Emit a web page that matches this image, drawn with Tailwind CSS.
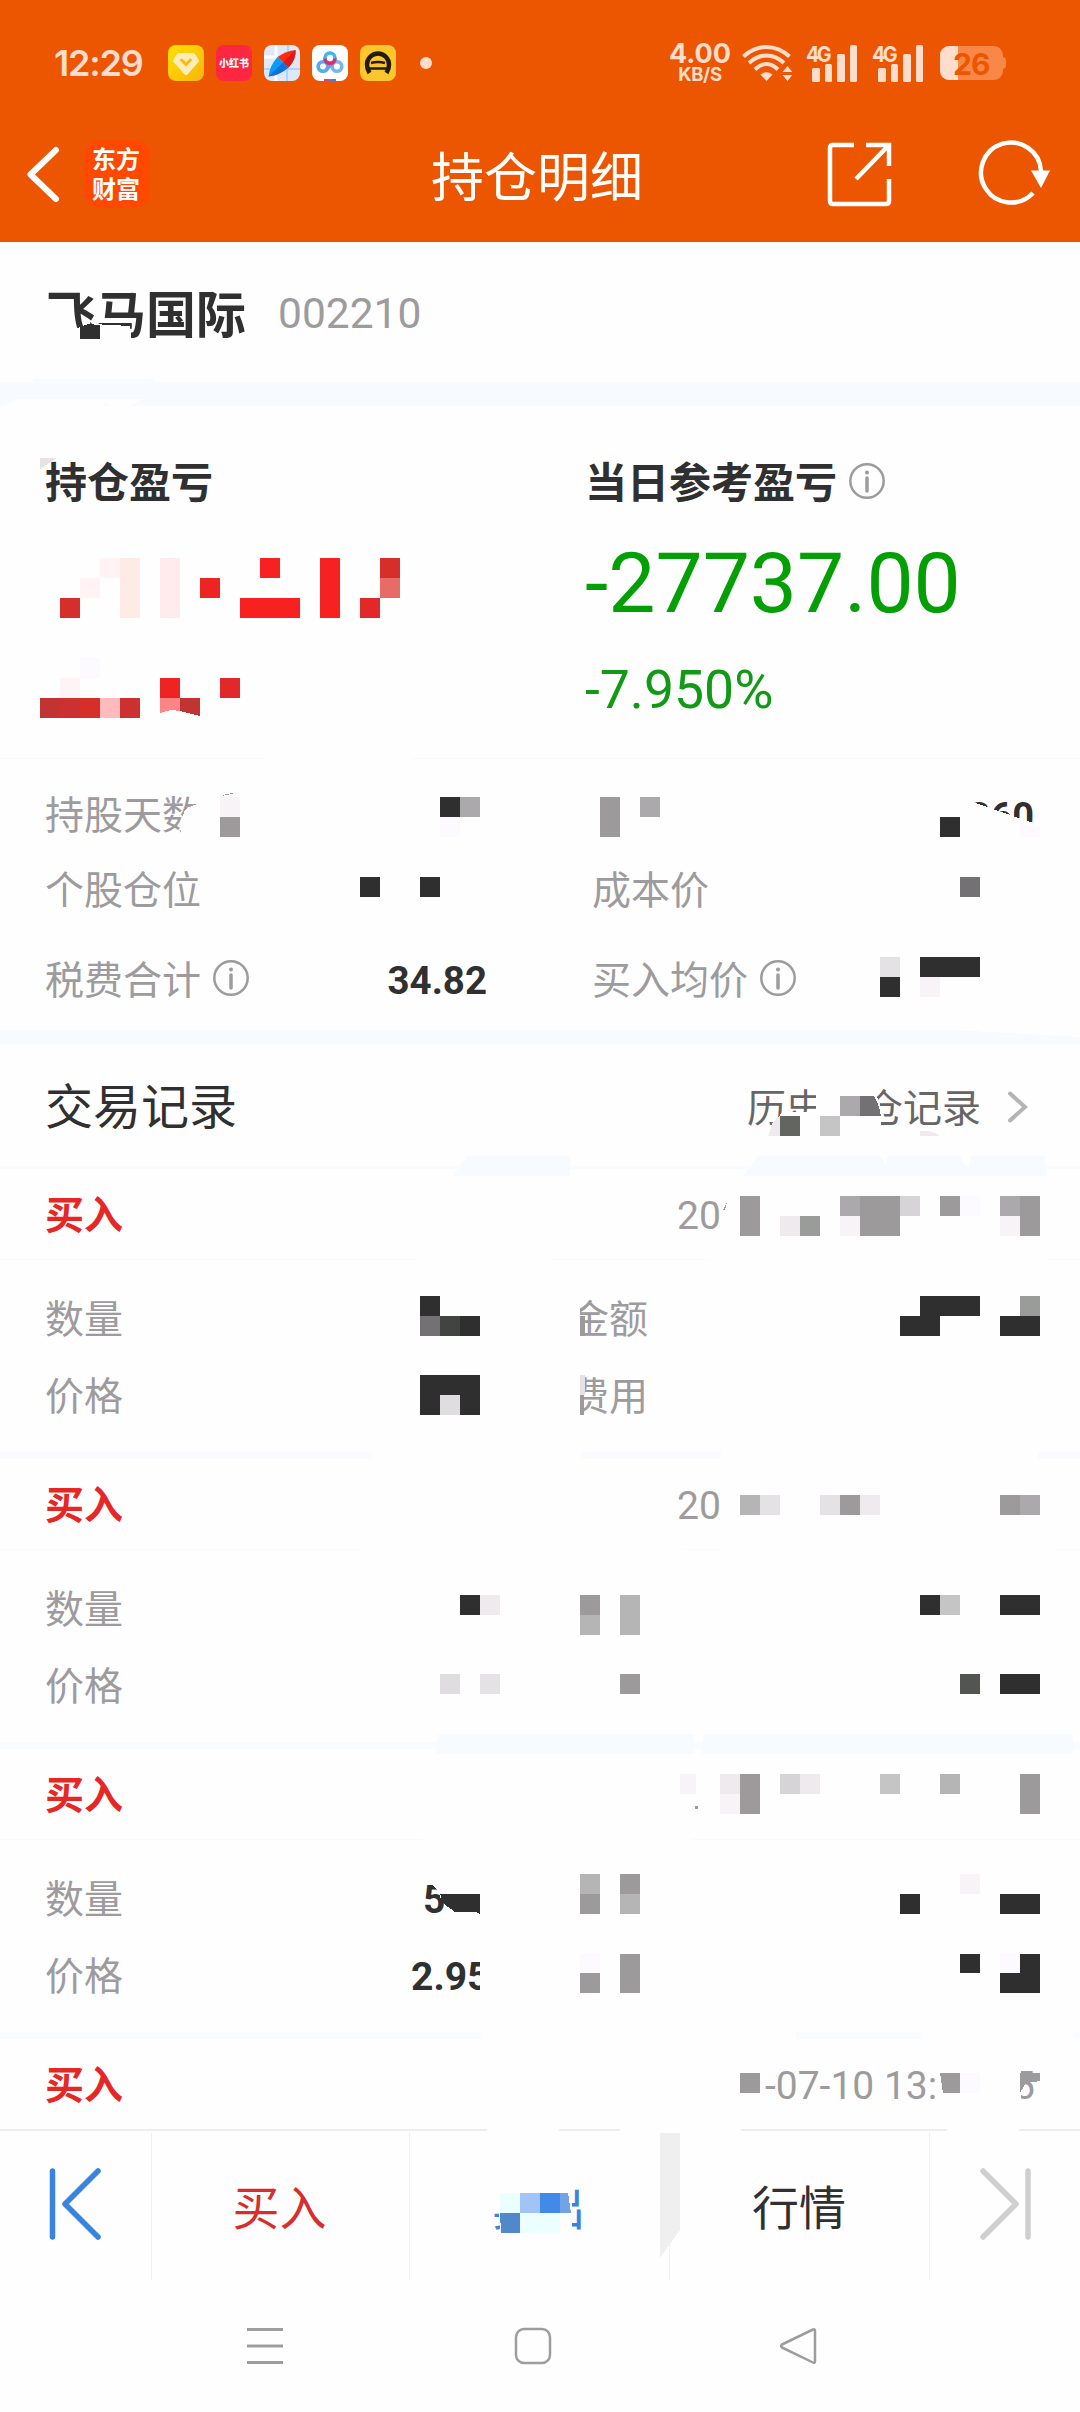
<!DOCTYPE html>
<html lang="zh-CN">
<head>
<meta charset="utf-8">
<title>持仓明细</title>
<script src="https://cdn.jsdelivr.net/npm/@tailwindcss/browser@4"></script>
</head>
<body class="relative w-[1080px] h-[2412px] overflow-hidden bg-[#fefefe] font-['Roboto','Noto_Sans_CJK_SC',sans-serif] text-[39px] leading-none text-[#303030] whitespace-nowrap">

<header class="h-[242px] bg-[#ec5600] text-white">
  <div class="h-[126px] flex items-center pl-[54px] text-[#ffdccb]">
    <span class="w-[114px] font-['Inter'] font-semibold text-[36px] tracking-[-1.2px]">12:29</span>
    <div class="flex gap-3">
      <svg class="size-9" viewBox="0 0 36 36"><defs><linearGradient id="gy" x2="1" y2="1"><stop stop-color="#ffe000"/><stop offset="1" stop-color="#f9b50d"/></linearGradient></defs><rect width="36" height="36" rx="8" fill="url(#gy)"/><path d="M11 8h14q1 0 2 1l4 6q.5 1-.5 2L19.500 29.500q-1.500 1.500-3 0L5.500 17q-1-1-.5-2l4-6q1-1 2-1z" fill="#ffecb8"/><path d="M13.500 15l4.500 4.500 4.500-4.500" fill="none" stroke="#f7bb10" stroke-width="3" stroke-linecap="round"/></svg>
      <div class="size-9 rounded-lg bg-[#fe2742] flex items-center justify-center font-black text-[10px] text-white font-['Noto_Sans_CJK_SC']">小红书</div>
      <svg class="size-9" viewBox="0 0 36 36"><rect width="36" height="36" rx="8" fill="#dfe8fb"/><path d="M12 0v36M0 12h14" stroke="#fff" stroke-width="3"/><path d="M24 0v10M0 24h8M20 24h16M23 22v14" stroke="#a8d8f4" stroke-width="2"/><path d="M31.500 5q1 9-7 17.500l-11-10.500Q22 6 31.500 5z" fill="#ff2a06"/><path d="M24.500 22.500l-5.500-5L31.500 5q1 9-7 17.500z" fill="#d81b1b"/><path d="M13.500 12l11 10.500Q16 30 4.500 31.500 6 20 13.500 12z" fill="#0a9cf5"/><path d="M4.500 31.500L19 17.500l5.500 5Q16 30 4.500 31.500z" fill="#1370d8"/></svg>
      <svg class="size-9" viewBox="0 0 36 36" fill="none" stroke-width="3.600"><rect width="36" height="36" rx="8" fill="#fff"/><circle cx="11" cy="21.500" r="4.800" stroke="#55a9ee"/><circle cx="25" cy="21.500" r="4.800" stroke="#77b6f0"/><path d="M14 25l7-7" stroke="#5ea6ee"/><circle cx="18" cy="13" r="5" stroke="#3db6ee"/><path d="M13 13.500a5 5 0 0 0 10 0" stroke="#dc2d70"/><path d="M12 35h6" stroke="#e8416f" stroke-width="2"/><path d="M18 35h6" stroke="#3b83e8" stroke-width="2"/></svg>
      <svg class="size-9" viewBox="0 0 36 36" fill="none" stroke="#211c0c" stroke-width="4.500"><rect width="36" height="36" rx="8" fill="#fdc62c" stroke="none"/><path d="M9.500 28Q7 24 7 19.500a11 11 0 0 1 22 0Q29 24 26.500 28"/><path d="M9 23.500h18M11 18q7-2 14 0" stroke-width="2.500"/></svg>
    </div>
    <span class="ml-6 size-3 rounded-full bg-[#ffdccb]"></span>
    <div class="ml-[237px] w-[62px] flex flex-col items-center font-['Inter'] font-bold">
      <span class="text-[27px] leading-[19px]">4.00</span>
      <span class="mt-[4px] text-[18.5px] leading-[15px] tracking-[-0.3px]">KB/S</span>
    </div>
    <svg class="ml-[11px] w-[50px] h-9" viewBox="0 0 50 36" fill="none" stroke="#ffdccb" stroke-width="4"><path d="M1.500 11.500Q12 2 24.500 2T47.500 11.500M7 18Q15 10.500 24.500 10.500T42 18M13 24.500Q18.500 19 24.500 19T36 24.500"/><path d="M18.500 29.500Q24.500 25 30.500 29.500L24.500 36z" fill="#ffdccb" stroke="none"/><path d="M40.500 27l5-6 5 6zM40.500 30l5 6 5-6z" fill="#ffdccb" stroke="none"/></svg>
    <div class="relative ml-[14px] w-[52px] h-[37px]">
      <span class="absolute left-0 -top-px font-['Inter'] font-bold text-[22px] leading-[21px] tracking-[-3px] origin-left scale-x-90">4G</span>
      <svg class="w-[52px] h-[37px]" viewBox="0 0 52 37" fill="#ffdccb"><rect x="6" y="23" width="8" height="14" rx="1.500"/><rect x="19" y="19" width="7" height="18" rx="1.500"/><rect x="31" y="9" width="8" height="28" rx="1.500"/><rect x="44" width="7" height="37" rx="1.500"/></svg>
    </div>
    <div class="relative ml-[14px] w-[52px] h-[37px]">
      <span class="absolute left-0 -top-px font-['Inter'] font-bold text-[22px] leading-[21px] tracking-[-3px] origin-left scale-x-90">4G</span>
      <svg class="w-[52px] h-[37px]" viewBox="0 0 52 37" fill="#ffdccb"><rect x="6" y="23" width="8" height="14" rx="1.500"/><rect x="19" y="19" width="7" height="18" rx="1.500"/><rect x="31" y="9" width="8" height="28" rx="1.500"/><rect x="44" width="7" height="37" rx="1.500"/></svg>
    </div>
    <div class="relative ml-4 w-[66px] h-[34px]">
      <div class="w-[63px] h-[34px] rounded-[9px] overflow-hidden bg-[#fa8748] flex"><span class="w-[18px] h-full bg-[#ffdccb]"></span></div>
      <span class="absolute right-0 top-[11px] w-[4px] h-3 rounded-r bg-[#fa8748]"></span>
      <span class="absolute left-[13px] top-[3px] font-['Inter'] font-bold text-[30px] leading-[30px] tracking-[-1px] text-[#ec5600]">26</span>
    </div>
  </div>
  <div class="h-[96px] flex items-center">
    <svg class="ml-[26px] w-[36px] h-[60px]" viewBox="0 0 36 60" fill="none" stroke="#fff" stroke-width="6" stroke-linecap="round" stroke-linejoin="round"><path d="M30 6L4.500 30.500 30 55"/></svg>
    <div class="ml-[22px] w-[66px] h-[68px] rounded-2xl bg-[#ff4800] flex flex-col items-center justify-center gap-[3px] pb-1 pr-[2px] font-bold text-[24px] leading-[27px] font-['Noto_Sans_CJK_SC']"><span>东方</span><span>财富</span></div>
    <h1 class="ml-[281px] w-[220px] text-[53px] leading-[60px] pt-2.5">持仓明细</h1>
    <svg class="ml-[175px] w-[66px] h-[66px]" viewBox="0 0 66 66" fill="none" stroke="#fff" stroke-width="4.500"><path d="M28 4H7Q4 4 4 7V60q0 3 3 3H60q3 0 3-3V38M40 4H63V25M62 5L30 38"/></svg>
    <svg class="ml-[84px] w-[76px] h-[70px]" viewBox="0 0 76 70" fill="none" stroke="#fff" stroke-width="4.500"><path d="M57 54A30 30 0 1 1 65 32"/><path d="M55 31.500h19l-9 17.500z" fill="#fff" stroke="none"/></svg>
  </div>
</header>

<section class="h-[140px] flex items-center pl-[46px]">
  <h2 class="font-bold text-[50px] leading-[60px] pt-[7px]">飞马国际</h2>
  <span class="ml-[32px] text-[42.500px] pt-1 text-[#9d9b9d]">002210</span>
</section>
<div class="h-6 bg-[#f7faff]"></div>

<section>
  <div class="h-[353px] pt-[46px] grid grid-cols-[540px_540px] border-b border-[#fafafa]">
    <div class="pl-[45px]"><h3 class="h-[60px] flex items-center pt-[3px] font-bold text-[42px]">持仓盈亏</h3></div>
    <div class="pl-[45px]">
      <h3 class="h-[60px] flex items-center pt-[3px] font-bold text-[42px]">当日参考盈亏
        <svg class="ml-3 -mt-[5px] size-9" viewBox="0 0 36 36" fill="none" stroke="#9d9b9d" stroke-width="2.500"><circle cx="18" cy="18" r="16.700"/><path d="M18 15v13" stroke-width="3.500" stroke-linecap="round"/><circle cx="18" cy="9.500" r="2" fill="#9d9b9d" stroke="none"/></svg></h3>
      <div class="mt-6 h-[94px] flex items-center pt-px text-[84px] text-[#049f04]">-27737.00</div>
      <div class="mt-[30px] h-[60px] flex items-center text-[53.500px] text-[#129a16]">-7.950%</div>
    </div>
  </div>
  <div class="h-[271px] pt-[20px] grid grid-cols-[441px_106px_442px] grid-rows-[75px_74px_90px] pl-[45px] text-[#9d9b9d]">
    <div class="flex items-center">持股天数</div><div></div><div class="flex items-center justify-end text-[#303030] font-bold text-[38px]">360</div>
    <div class="flex items-center">个股仓位</div><div></div><div class="flex items-center">成本价</div>
    <div class="flex items-center justify-between pt-4"><span class="flex items-center">税费合计<svg class="ml-3 -mt-[6px] size-9" viewBox="0 0 36 36" fill="none" stroke="#9d9b9d" stroke-width="2.500"><circle cx="18" cy="18" r="16.700"/><path d="M18 15v13" stroke-width="3.500" stroke-linecap="round"/><circle cx="18" cy="9.500" r="2" fill="#9d9b9d" stroke="none"/></svg></span><b class="text-[#303030] text-[38.500px] -mr-px">34.82</b></div>
    <div></div>
    <div class="flex items-center pt-4">买入均价<svg class="ml-3 -mt-[6px] size-9" viewBox="0 0 36 36" fill="none" stroke="#9d9b9d" stroke-width="2.500"><circle cx="18" cy="18" r="16.700"/><path d="M18 15v13" stroke-width="3.500" stroke-linecap="round"/><circle cx="18" cy="9.500" r="2" fill="#9d9b9d" stroke="none"/></svg></div>
  </div>
</section>
<div class="h-[14px] bg-[#f7faff]"></div>

<section>
  <div class="h-[122px] flex items-center justify-between pl-[45px] pr-[51px]">
    <h3 class="text-[48px] pt-[5px]">交易记录</h3>
    <span class="flex items-center text-[#666] pt-[9px]">历史持仓记录<svg class="ml-[26px] -mt-[6px] w-[22px] h-8" viewBox="0 0 22 32" fill="none" stroke="#b5b3b5" stroke-width="4" stroke-linecap="round"><path d="M3 2.500L18 16 3 29.500"/></svg></span>
  </div>
  <div class="h-[3px] bg-[#f9fbff]"></div>

  <article class="h-[283px] pb-[18px]">
    <div class="h-[91px] flex items-center pl-[45px] border-b border-[#fafafa] pt-1"><b class="w-[632px] text-[#e62726]">买入</b><span class="text-[#9d9b9d]">20</span></div>
    <div class="pt-[22px] grid grid-cols-[441px_84px_1fr] auto-rows-[77px] items-center pl-[45px] text-[#9d9b9d]"><span>数量</span><span></span><span>金额</span><span>价格</span><span></span><span>费用</span></div>
  </article>
  <div class="h-[7px] bg-[#f9fbff]"></div>

  <article class="h-[283px] pb-[18px]">
    <div class="h-[91px] flex items-center pl-[45px] border-b border-[#fafafa] pt-1"><b class="w-[632px] text-[#e62726]">买入</b><span class="text-[#9d9b9d]">20</span></div>
    <div class="pt-[22px] grid grid-cols-[441px_85px_1fr] auto-rows-[77px] items-center pl-[45px] text-[#9d9b9d]"><span>数量</span><span></span><span></span><span>价格</span></div>
  </article>
  <div class="h-[7px] bg-[#f9fbff]"></div>

  <article class="h-[283px] pb-[18px]">
    <div class="h-[91px] flex items-center pl-[45px] border-b border-[#fafafa] pt-1"><b class="text-[#e62726]">买入</b></div>
    <div class="pt-[22px] grid grid-cols-[378px_63px] auto-rows-[77px] items-center pl-[45px] text-[#9d9b9d]"><span>数量</span><b class="text-[#303030]">5</b><span>价格</span><b class="text-[#303030] -ml-3">2.95</b></div>
  </article>
  <div class="h-[7px] bg-[#f9fbff]"></div>

  <div class="h-[90px] flex items-center pl-[45px] pr-[45px] pt-1"><b class="w-[720px] text-[#e62726]">买入</b><span class="flex-1 text-[#9d9b9d]">-07-10 13:</span><span class="text-[#9d9b9d]">5</span></div>
</section>

<footer>
  <div class="h-[153px] flex border-t-2 border-[#ededed] text-[47px]">
    <div class="w-[151px] flex items-center pb-3 pl-[46px]"><svg class="mt-[6px] w-[60px] h-[76px]" viewBox="0 0 60 76" fill="none" stroke="#3a84df" stroke-width="5.500" stroke-linecap="round" stroke-linejoin="round"><path d="M6.500 5v66M52 5L19 38l33 33"/></svg></div>
    <div class="my-0.5 w-[259px] flex items-center justify-center pr-[2px] pt-1 border-x border-[#f0f0f0] text-[#d72e2b]">买入</div>
    <div class="my-0.5 w-[260px] flex items-center justify-center pr-[2px] pt-1 border-r border-[#f0f0f0] text-[#3a84df]">卖出</div>
    <div class="my-0.5 w-[260px] flex items-center justify-center pr-px pt-1 border-r border-[#f0f0f0]">行情</div>
    <div class="w-[150px] flex items-center pb-3 pl-[47px]"><svg class="mt-[6px] w-[60px] h-[76px]" viewBox="0 0 60 76" fill="none" stroke="#cfcfcf" stroke-width="5.500" stroke-linecap="round" stroke-linejoin="round"><path d="M51 5v66M6 5l33 33L6 71"/></svg></div>
  </div>
  <nav class="h-[128px] flex items-center pl-[246px] gap-[230px]">
    <svg class="size-[38px]" viewBox="0 0 38 38" stroke="#9d9d9d" stroke-width="3"><path d="M1 2.500h36M1 19h36M1 35.500h36"/></svg>
    <svg class="size-[38px]" viewBox="0 0 38 38" fill="none" stroke="#9d9d9d" stroke-width="2.500"><rect x="2" y="2" width="34" height="34" rx="8"/></svg>
    <svg class="size-[38px] -ml-[3px]" viewBox="0 0 38 38" fill="none" stroke="#9d9d9d" stroke-width="2.500" stroke-linejoin="round"><path d="M34 2.500q2-1 2 1.500v30q0 2.500-2 1.500L3 20.500q-2-1.500 0-3z"/></svg>
  </nav>
</footer>

<!-- privacy mosaic laid over the page -->
<svg class="absolute inset-0 w-[1080px] h-[2412px] pointer-events-none" viewBox="0 0 1080 2412" shape-rendering="crispEdges">
  <g fill="#fefefe">
    <path d="M70 333L80 327 92 324 130 326 132 342H70z"/>
    <path d="M5 406L16 399H143L130 406H110L104 403 105 406z"/>
    <path d="M265 757h147v5h-147z"/>
    <path d="M181 840V822L184 812 187 808 200 803V840z"/>
    <path d="M970 801L1036 824V845H960z"/>
    <path d="M953 1030L1080 1030V1037z"/>
    <path d="M774 1125L781 1113 816 1111V1086H872L880 1104 882 1140H770z"/>
    <path d="M419 1257h133v5H419zM708 1257h339v5H708zM362 1547h322v5H362zM722 1547h332v5H722zM422 1837h270v5H422z"/>
    <path d="M565 1290h15v130h-15zM372 1450h209v10H372zM721 1450h317v10H721zM482 2030h314v10H482zM923 2030h152v10H923z"/>
    <path d="M427 1880L440 1892V1898H447V1880zM480 1955h12v40h-12z"/>
    <path d="M487 2127h72v6h-72zM620 2127h121v6H620zM947 2127h72v6h-72z"/>
    <path d="M490 2180H572V2236H501L499 2213H490z"/>
    <path d="M1015 2068h6v35h-6z"/>
  </g>
  <g fill="#f7faff">
    <path d="M33 379H155V383H33z"/>
    <path d="M453 1176L467 1156H570V1176zM743 1176L758 1156H880L886 1165 888 1156H960L968 1172 971 1156H1045L1047 1176z"/>
    <path d="M438 1734H694V1754H436zM703 1734H1073V1754H702z"/>
  </g>
  <path fill="#e6e2e6" d="M40 458H57L40 469z"/>
  <path fill="#fff3f6" d="M80 578h20v20h-20zM100 558h20v20h-20zM60 678h20v20h-20z"/>
  <path fill="#ffebe5" d="M120 558h20v60h-20z"/>
  <path fill="#ffeaee" d="M160 558h20v60h-20z"/>
  <path fill="#d62f2a" d="M60 598h20v20h-20zM380 558h20v20h-20zM80 698h20v20h-20z"/>
  <path fill="#ee2423" d="M200 578h20v20h-20zM160 678h20v20h-20z"/>
  <path fill="#f82121" d="M240 598h60v20h-60zM260 558h20v20h-20zM320 558h20v60h-20z"/>
  <path fill="#e1292a" d="M360 598h20v20h-20zM220 678h20v20h-20z"/>
  <path fill="#e76b66" d="M380 578h20v20h-20z"/>
  <path fill="#c23433" d="M40 698h20v20h-20zM180 698h20v18L180 711z"/>
  <path fill="#cc3031" d="M60 698h20v20h-20zM120 698h20v20h-20z"/>
  <path fill="#ffbabd" d="M100 698h20v20h-20z"/>
  <path fill="#ff8486" d="M160 698h20v13L171 710 160 713z"/>
  <path fill="#fdfaff" d="M80 658h20v20h-20zM440 817h20v20h-20zM1020 823l20 5v9h-20zM960 1196h20v20h-20zM580 1954h20v19h-20zM1000 1954h20v19h-20zM960 2073h20v20h-20z"/>
  <path fill="#f7f3f6" d="M220 797h20v20h-20zM920 977h20v20h-20zM840 1216h20v20h-20zM1000 1216h20v20h-20zM680 1774h16v20h-16zM720 1794h20v20h-20zM960 1874h20v20h-20z"/>
  <path fill="#eeeaed" d="M780 1216h20v20h-20zM720 1774h20v20h-20zM800 1774h20v20h-20zM860 1495h20v20h-20zM480 1595h20v20h-20zM768 1136L773 1122 780 1116V1136zM920 1131Q932 1130 940 1136H920z"/>
  <path fill="#e4e2e4" d="M880 957h20v20h-20zM580 1375h5v20h-5zM760 1495h20v20h-20zM820 1495h20v20h-20zM480 1674h20v20h-20z"/>
  <path fill="#9d9a9c" d="M220 817h20v20h-20zM600 797h20v40h-20zM740 1196h20v40h-20zM860 1196h40v40h-40zM940 1196h20v20h-20zM1020 1196h20v40h-20zM580 1316h5v20h-5zM580 1395h4v20h-4zM840 1495h20v20h-20zM1000 1495h20v20h-20zM580 1595h20v20h-20zM620 1674h20v20h-20zM740 1774h20v40h-20zM1020 1774h20v40h-20zM620 1874h20v20h-20zM580 1894h20v20h-20zM620 1954h20v39h-20zM580 1973h20v20h-20zM740 2073h20v20h-20zM940 2073h20v20h-17zM1020 2073h20v8l-14 2-6 10zM695 1806h3v3h-3z"/>
  <path fill="#9d9a9c" d="M222 796q6-4 14-2-8 0-14 2zM723 1210l4-8-2 8z"/>
  <path fill="#aba9ab" d="M460 797h20v20h-20zM640 797h20v20h-20zM840 1196h20v20h-20zM1000 1196h20v20h-20zM1020 1495h20v20h-20zM840 1096h20v20h-20z"/>
  <path fill="#9a9c99" d="M800 1216h20v20h-20zM1020 1296h20v20h-20z"/>
  <path fill="#b5b5b5" d="M740 1495h20v20h-20zM620 1595h20v40h-20zM580 1615h20v20h-20zM580 1874h20v20h-20zM620 1894h20v20h-20zM940 1774h20v20h-20z"/>
  <path fill="#c6c5c6" d="M820 1116h20v20h-20zM940 1595h20v20h-20zM880 1774h20v20h-20z"/>
  <path fill="#d7d4d7" d="M900 1196h20v20h-20zM780 1774h20v20h-20z"/>
  <path fill="#737173" d="M960 877h20v20h-20zM860 1096h14q5 8 7 20h-21zM420 1316h20v20h-20z"/>
  <path fill="#636561" d="M780 1116h20v20h-20z"/>
  <path fill="#535551" d="M960 1674h20v20h-20z"/>
  <path fill="#424441" d="M440 1316h20v20h-20z"/>
  <path fill="#2f2f2f" d="M80 327l8-3 12 1v14H80zM440 797h20v20h-20zM360 877h20v20h-20zM420 877h20v20h-20zM940 817h20v20h-20zM880 977h20v20h-20zM920 957h60v20h-60zM420 1296h20v20h-20zM460 1316h20v20h-20zM920 1296h60v20h-60zM900 1316h40v20h-40zM1000 1316h40v20h-40zM420 1375h60v40h-60zM460 1595h20v20h-20zM920 1595h20v20h-20zM1000 1595h40v20h-40zM1000 1674h40v20h-40zM440 1894h40v20l-4-2H455L444 1904zM900 1894h20v20h-20zM1000 1894h40v20h-40zM960 1954h20v19h-20zM1020 1954h20v39h-40v-20h20z"/>
  <path fill="#e0dde0" d="M440 1395h20v20h-20zM440 1674h20v20h-20z"/>
  <path fill="#efefef" d="M660 2133h20v97l-20 28z"/>
  <path fill="#ecffff" d="M500 2193h20v20h-20zM520 2213h40v20h-40z"/>
  <path fill="#a0c4f8" d="M520 2193h20v20h-20z"/>
  <path fill="#418ae7" d="M540 2193h20v20h-20z"/>
  <path fill="#72a3e6" d="M560 2193h8l3 20h-11z"/>
  <path fill="#5088cc" d="M500 2213h20v20h-19z"/>
</svg>
</body>
</html>
